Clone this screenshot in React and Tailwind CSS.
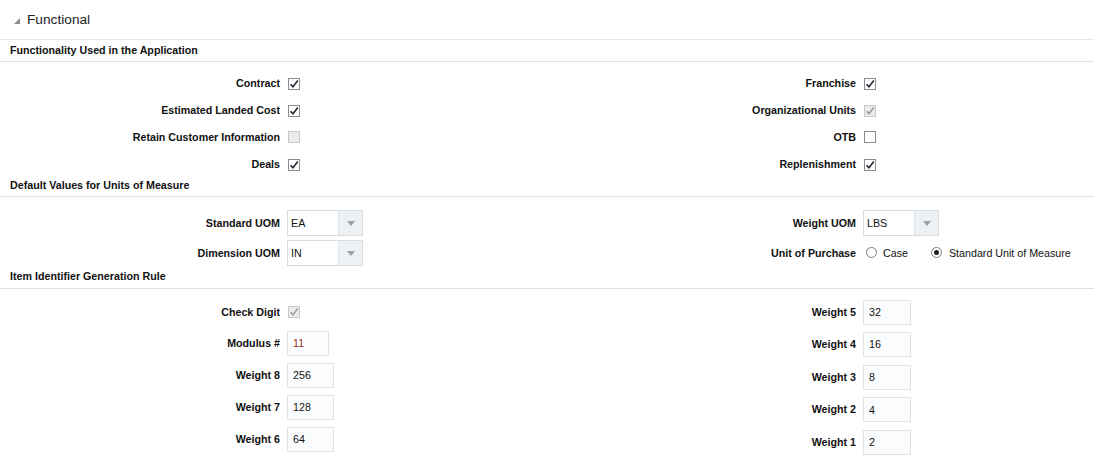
const font = { fontFamily: '"Liberation Sans", Arial, sans-serif' };

function Check({ checked, disabled }) {
    const box = disabled
        ? "bg-[#ececec] border-[#c9c9c9]"
        : "bg-white border-[#8c8c8c]";
    return (
        <span className={`inline-flex items-center justify-center w-[12px] h-[12px] border ${box}`}>
            {checked && (
                <svg width="10" height="10" viewBox="0 0 10 10">
                    <path d="M1.5 5.2 L4 7.8 L8.8 1.6" fill="none" stroke={disabled ? "#9c9c9c" : "#1d2733"} strokeWidth="1.6" />
                </svg>
            )}
        </span>
    );
}

function Radio({ selected }) {
    return (
        <span className="inline-flex items-center justify-center w-[11px] h-[11px] rounded-full border border-[#7a7a7a] bg-white">
            {selected && <span className="w-[5px] h-[5px] rounded-full bg-[#222]" />}
        </span>
    );
}

function Select({ value }) {
    return (
        <div className="flex w-[76px] h-[26px] border border-[#d6dde3]">
            <div className="flex-1 flex items-center pl-[3px] bg-white text-[10.7px] text-[#111]">{value}</div>
            <div className="w-[24px] flex items-center justify-center bg-[#eef1f3] border-l border-[#dfe4e8]">
                <svg width="8" height="5" viewBox="0 0 8 5"><path d="M0 0 H8 L4 5 Z" fill="#9aa0a6" /></svg>
            </div>
        </div>
    );
}

function Input({ value, w, red }) {
    return (
        <div className={`${w} h-[25px] flex items-center pl-[5px] border border-[#dfe3e7] bg-[#fbfcfd] text-[10.7px] ${red ? "text-[#8a3412]" : "text-[#111]"}`}>
            {value}
        </div>
    );
}

function Row({ label, h, children }) {
    return (
        <div className={`flex items-center ${h}`}>
            <div className="w-[280px] text-right font-bold text-[10.7px] text-[#111] leading-[13px]">{label}</div>
            <div className="ml-[7px] flex items-center">{children}</div>
        </div>
    );
}

function Heading({ children, pt, pb }) {
    return (
        <div className={`px-[10px] ${pt} ${pb} border-b border-[#dde1e5] font-bold text-[10.7px] leading-[13px] text-[#111]`}>
            {children}
        </div>
    );
}

export default function App() {
    return (
        <div className="w-[1094px] h-[457px] bg-white overflow-hidden" style={font}>
            <div className="h-[40px] flex items-center border-b border-[#e3e6ea] pl-[14px]">
                <svg width="6" height="6" viewBox="0 0 6 6" className="mt-[2px]"><path d="M6 0 V6 H0 Z" fill="#8d8d8d" /></svg>
                <span className="ml-[7px] text-[13.7px] text-[#222] leading-[16px]">Functional</span>
            </div>

            <Heading pt="pt-[4px]" pb="pb-[4px]">Functionality Used in the Application</Heading>
            <div className="grid grid-cols-[576px_1fr] pt-[8px]">
                <div className="flex flex-col">
                    <Row label="Contract" h="h-[27px]"><span className="ml-[1px]"><Check checked /></span></Row>
                    <Row label="Estimated Landed Cost" h="h-[27px]"><span className="ml-[1px]"><Check checked /></span></Row>
                    <Row label="Retain Customer Information" h="h-[27px]"><span className="ml-[1px]"><Check disabled /></span></Row>
                    <Row label="Deals" h="h-[27px]"><span className="ml-[1px]"><Check checked /></span></Row>
                </div>
                <div className="flex flex-col">
                    <Row label="Franchise" h="h-[27px]"><span className="ml-[1px]"><Check checked /></span></Row>
                    <Row label="Organizational Units" h="h-[27px]"><span className="ml-[1px]"><Check checked disabled /></span></Row>
                    <Row label="OTB" h="h-[27px]"><span className="ml-[1px]"><Check /></span></Row>
                    <Row label="Replenishment" h="h-[27px]"><span className="ml-[1px]"><Check checked /></span></Row>
                </div>
            </div>

            <Heading pt="pt-[1px]" pb="pb-[4px]">Default Values for Units of Measure</Heading>
            <div className="grid grid-cols-[576px_1fr] pt-[11px]">
                <div className="flex flex-col">
                    <Row label="Standard UOM" h="h-[30px]"><Select value="EA" /></Row>
                    <Row label="Dimension UOM" h="h-[30px]"><Select value="IN" /></Row>
                </div>
                <div className="flex flex-col">
                    <Row label="Weight UOM" h="h-[30px]"><Select value="LBS" /></Row>
                    <Row label="Unit of Purchase" h="h-[30px]">
                        <div className="flex items-center text-[10.7px] text-[#111] pl-[3px]">
                            <Radio />
                            <span className="ml-[6px]">Case</span>
                            <span className="ml-[23px] flex items-center"><Radio selected /></span>
                            <span className="ml-[7px]">Standard Unit of Measure</span>
                        </div>
                    </Row>
                </div>
            </div>

            <Heading pt="pt-[2px]" pb="pb-[5px]">Item Identifier Generation Rule</Heading>
            <div className="grid grid-cols-[576px_1fr] pt-[11px]">
                <div className="flex flex-col gap-[7px]">
                    <Row label="Check Digit" h="h-[24px]"><span className="ml-[1px]"><Check checked disabled /></span></Row>
                    <Row label="Modulus #" h="h-[25px]"><Input value="11" w="w-[42px]" red /></Row>
                    <Row label="Weight 8" h="h-[25px]"><Input value="256" w="w-[47px]" /></Row>
                    <Row label="Weight 7" h="h-[25px]"><Input value="128" w="w-[47px]" /></Row>
                    <Row label="Weight 6" h="h-[25px]"><Input value="64" w="w-[47px]" /></Row>
                </div>
                <div className="flex flex-col gap-[7.75px]">
                    <Row label="Weight 5" h="h-[24px]"><Input value="32" w="w-[48px]" /></Row>
                    <Row label="Weight 4" h="h-[25px]"><Input value="16" w="w-[48px]" /></Row>
                    <Row label="Weight 3" h="h-[25px]"><Input value="8" w="w-[48px]" /></Row>
                    <Row label="Weight 2" h="h-[25px]"><Input value="4" w="w-[48px]" /></Row>
                    <Row label="Weight 1" h="h-[25px]"><Input value="2" w="w-[48px]" /></Row>
                </div>
            </div>
        </div>
    );
}
